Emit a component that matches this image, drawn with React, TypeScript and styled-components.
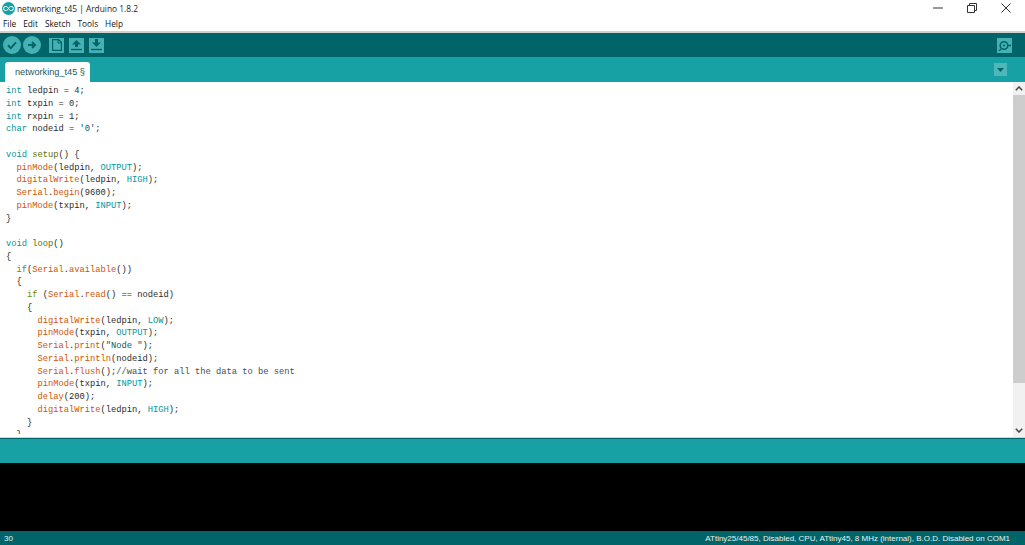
import React, { FC } from 'react';
import styled, { createGlobalStyle } from 'styled-components';

const CODE = [
    'int ledpin = 4;',
    'int txpin = 0;',
    'int rxpin = 1;',
    "char nodeid = '0';",
    '',
    'void setup() {',
    '  pinMode(ledpin, OUTPUT);',
    '  digitalWrite(ledpin, HIGH);',
    '  Serial.begin(9600);',
    '  pinMode(txpin, INPUT);',
    '}',
    '',
    'void loop()',
    '{',
    '  if(Serial.available())',
    '  {',
    '    if (Serial.read() == nodeid)',
    '    {',
    '      digitalWrite(ledpin, LOW);',
    '      pinMode(txpin, OUTPUT);',
    '      Serial.print("Node ");',
    '      Serial.println(nodeid);',
    '      Serial.flush();//wait for all the data to be sent',
    '      pinMode(txpin, INPUT);',
    '      delay(200);',
    '      digitalWrite(ledpin, HIGH);',
    '    }',
    '  }',
];

const COLORS: Record<string, string> = {
    type: '#00979c',
    func: '#d35400',
    ctrl: '#728e00',
    decl: '#5e6d03',
    str: '#005c5f',
    note: '#434f54',
    plain: '#2b2b2b',
};

const TOKENS = /(\/\/.*$)|("[^"]*"|'[^']*')|\b(int|char|void|OUTPUT|INPUT|HIGH|LOW)\b|\b(pinMode|digitalWrite|delay|Serial|begin|available|read|print|println|flush)\b|\b(if)\b|\b(setup|loop)\b/g;

const tokenize = (line: string) => {
    const parts: { text: string; kind: string }[] = [];
    let last = 0;
    for (const m of line.matchAll(TOKENS)) {
        if (m.index > last) parts.push({ text: line.slice(last, m.index), kind: 'plain' });
        const kind = m[1] ? 'note' : m[2] ? 'str' : m[3] ? 'type' : m[4] ? 'func' : m[5] ? 'ctrl' : 'decl';
        parts.push({ text: m[0], kind });
        last = m.index + m[0].length;
    }
    if (last < line.length) parts.push({ text: line.slice(last), kind: 'plain' });
    return parts;
};

const CodeLines: FC = () => (
    <Code>
        {CODE.map((line, i) => (
            <CodeLine key={i}>
                {tokenize(line).map((part, j) => (
                    <Token key={j} $kind={part.kind}>{part.text}</Token>
                ))}
            </CodeLine>
        ))}
    </Code>
);

const App: FC = () => {
    return (
        <Window>
            <GlobalStyle />
            <TitleBar>
                <svg width="13" height="13" viewBox="0 0 13 13">
                    <circle cx="6.5" cy="6.5" r="6.5" fill="#17a1a5" />
                    <path d="M6.5 6.5C5.5 4.8 4.6 4.4 3.7 4.4a2.1 2.1 0 0 0 0 4.2c.9 0 1.8-.4 2.8-2.1 1-1.7 1.9-2.1 2.8-2.1a2.1 2.1 0 0 1 0 4.2c-.9 0-1.8-.4-2.8-2.1z" fill="none" stroke="#fff" strokeWidth="1" />
                </svg>
                <TitleText>networking_t45 | Arduino 1.8.2</TitleText>
                <WindowControls>
                    <WindowButton>
                        <svg width="10" height="10" viewBox="0 0 10 10"><path d="M0 5h10" stroke="#333" strokeWidth="1" /></svg>
                    </WindowButton>
                    <WindowButton>
                        <svg width="10" height="10" viewBox="0 0 10 10"><path d="M.5 2.5h7v7h-7zM2.5 2.5v-2h7v7h-2" fill="none" stroke="#333" strokeWidth="1" /></svg>
                    </WindowButton>
                    <WindowButton>
                        <svg width="10" height="10" viewBox="0 0 10 10"><path d="M.5.5l9 9M9.5.5l-9 9" stroke="#333" strokeWidth="1" /></svg>
                    </WindowButton>
                </WindowControls>
            </TitleBar>
            <MenuBar>
                {['File', 'Edit', 'Sketch', 'Tools', 'Help'].map((item) => (
                    <MenuItem key={item}>{item}</MenuItem>
                ))}
            </MenuBar>
            <Toolbar>
                <RoundButton>
                    <svg width="12" height="12" viewBox="0 0 12 12"><path d="M2 6.3l2.8 2.8L10 3.4" fill="none" stroke="#006468" strokeWidth="2" /></svg>
                </RoundButton>
                <RoundButton>
                    <svg width="12" height="12" viewBox="0 0 12 12"><path d="M2 6h6.5M6 3l3 3-3 3" fill="none" stroke="#006468" strokeWidth="2" /></svg>
                </RoundButton>
                <SquareGroup>
                    <SquareButton>
                        <svg width="10" height="12" viewBox="0 0 10 12"><path d="M.5.5h6l3 3v8h-9z" fill="none" stroke="#006468" strokeWidth="1.4" /><path d="M6 1v3h3" fill="none" stroke="#006468" /></svg>
                    </SquareButton>
                    <SquareButton>
                        <svg width="11" height="12" viewBox="0 0 11 12"><path d="M5.5 1L10 5.5H7V8H4V5.5H1z" fill="#006468" /><path d="M0 10.5h11" stroke="#006468" strokeWidth="1.4" /></svg>
                    </SquareButton>
                    <SquareButton>
                        <svg width="11" height="12" viewBox="0 0 11 12"><path d="M4 0h3v3.5h3L5.5 8 1 3.5h3z" fill="#006468" /><path d="M0 10.5h11" stroke="#006468" strokeWidth="1.4" /></svg>
                    </SquareButton>
                </SquareGroup>
                <MonitorButton>
                    <svg width="13" height="11" viewBox="0 0 13 11"><circle cx="6" cy="5.5" r="3.8" fill="none" stroke="#006468" strokeWidth="1.6" /><circle cx="6" cy="5.5" r="1.1" fill="#006468" /><path d="M9.5 5.5H13M3 9l-2 2" stroke="#006468" strokeWidth="1.4" /></svg>
                </MonitorButton>
            </Toolbar>
            <TabStrip>
                <Tab>networking_t45 §</Tab>
                <TabMenu>
                    <svg width="7" height="4" viewBox="0 0 7 4"><path d="M0 0h7L3.5 4z" fill="#006468" /></svg>
                </TabMenu>
            </TabStrip>
            <EditorArea>
                <CodeLines />
                <ScrollBar>
                    <ScrollArrow>
                        <svg width="8" height="5" viewBox="0 0 8 5"><path d="M.8 4.2L4 1l3.2 3.2" fill="none" stroke="#444" strokeWidth="1.5" /></svg>
                    </ScrollArrow>
                    <ScrollThumb />
                    <ScrollRest />
                    <ScrollArrow>
                        <svg width="8" height="5" viewBox="0 0 8 5"><path d="M.8.8L4 4 7.2.8" fill="none" stroke="#444" strokeWidth="1.5" /></svg>
                    </ScrollArrow>
                </ScrollBar>
            </EditorArea>
            <StatusStrip />
            <Console />
            <Footer>
                <span>30</span>
                <BoardInfo>ATtiny25/45/85, Disabled, CPU, ATtiny45, 8 MHz (internal), B.O.D. Disabled on COM1</BoardInfo>
            </Footer>
        </Window>
    );
};

const GlobalStyle = createGlobalStyle`
    html, body {
        margin: 0;
        padding: 0;
        background: #fff;
        overflow: hidden;
    }
`;

const Window = styled.div`
    width: 1025px;
    height: 545px;
    display: flex;
    flex-direction: column;
    overflow: hidden;
    font-family: "Open Sans", "Liberation Sans", sans-serif;
`;

const TitleBar = styled.div`
    height: 16px;
    display: flex;
    align-items: center;
    padding-left: 2px;
    flex-shrink: 0;
`;

const TitleText = styled.span`
    margin-left: 2px;
    font-size: 8.35px;
    color: #222;
    white-space: nowrap;
`;

const WindowControls = styled.div`
    margin-left: auto;
    display: flex;
    padding-right: 2px;
`;

const WindowButton = styled.div`
    width: 34px;
    height: 16px;
    display: flex;
    align-items: center;
    justify-content: center;
`;

const MenuBar = styled.div`
    height: 15px;
    display: flex;
    align-items: center;
    gap: 7px;
    padding-left: 3px;
    flex-shrink: 0;
`;

const MenuItem = styled.span`
    font-size: 8.3px;
    color: #111;
`;

const Toolbar = styled.div`
    height: 24px;
    flex-shrink: 0;
    display: flex;
    align-items: center;
    gap: 2px;
    padding: 0 13px 0 3px;
    box-sizing: content-box;
    background: #006468;
    border-top: 2px solid #cfd1d1;
`;

const RoundButton = styled.div`
    width: 18px;
    height: 18px;
    border-radius: 50%;
    background: #46b1b4;
    display: flex;
    align-items: center;
    justify-content: center;
`;

const SquareGroup = styled.div`
    display: flex;
    gap: 5px;
    margin-left: 6px;
`;

const SquareButton = styled.div`
    width: 15px;
    height: 15px;
    background: #46b1b4;
    display: flex;
    align-items: center;
    justify-content: center;
`;

const MonitorButton = styled(SquareButton)`
    margin-left: auto;
`;

const TabStrip = styled.div`
    height: 25px;
    flex-shrink: 0;
    display: flex;
    align-items: flex-end;
    padding: 0 18px 0 5px;
    background: #17a1a5;
    box-sizing: border-box;
`;

const Tab = styled.div`
    width: 85px;
    height: 20px;
    box-sizing: border-box;
    padding-left: 10px;
    background: #fff;
    border-radius: 3px 3px 0 0;
    font-family: "Liberation Sans", sans-serif;
    font-size: 9.2px;
    line-height: 20px;
    color: #1d5a5c;
    white-space: nowrap;
`;

const TabMenu = styled.div`
    margin: 0 0 6px auto;
    width: 13px;
    height: 13px;
    background: #4db7ba;
    display: flex;
    align-items: center;
    justify-content: center;
`;

const EditorArea = styled.div`
    height: 355px;
    flex-shrink: 0;
    display: flex;
    background: #fff;
    overflow: hidden;
    border-bottom: 1px solid #d4d4d4;
    box-sizing: content-box;
`;

const Code = styled.div`
    flex: 1;
    height: 352px;
    box-sizing: border-box;
    padding: 3px 0 0 6px;
    overflow: hidden;
    font-family: "Liberation Mono", monospace;
    font-size: 8.75px;
    line-height: 12.76px;
`;

const CodeLine = styled.div`
    height: 12.76px;
    white-space: pre;
`;

const Token = styled.span<{ $kind: string }>`
    color: ${(props) => COLORS[props.$kind]};
`;

const ScrollBar = styled.div`
    width: 12px;
    display: flex;
    flex-direction: column;
    background: #f1f1f1;
`;

const ScrollArrow = styled.div`
    height: 13px;
    display: flex;
    align-items: center;
    justify-content: center;
`;

const ScrollThumb = styled.div`
    height: 288px;
    background: #cdcdcd;
`;

const ScrollRest = styled.div`
    flex: 1;
`;

const StatusStrip = styled.div`
    height: 25px;
    flex-shrink: 0;
    background: #17a1a5;
    border-top: 1px solid #006468;
    box-sizing: border-box;
`;

const Console = styled.div`
    height: 68px;
    flex-shrink: 0;
    background: #000;
`;

const Footer = styled.div`
    flex: 1;
    display: flex;
    align-items: center;
    justify-content: space-between;
    padding: 0 15px 0 4px;
    background: #006468;
    color: #e6f2f2;
    font-family: "Liberation Sans", sans-serif;
    font-size: 8px;
`;

const BoardInfo = styled.span`
    white-space: nowrap;
`;

export default App;
